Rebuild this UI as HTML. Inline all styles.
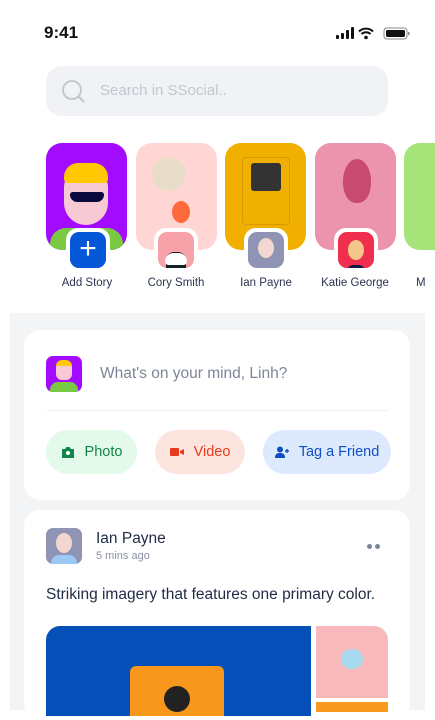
<!DOCTYPE html>
<html><head><meta charset="utf-8"><style>
*{margin:0;padding:0;box-sizing:border-box}
body{width:435px;height:710px;overflow:hidden;background:#fff;font-family:"Liberation Sans",sans-serif;position:relative;color:#1f2a44}
.abs{position:absolute}
.story{position:absolute;top:143px;width:81px;height:107px;border-radius:16px;overflow:hidden}
.badge{position:absolute;top:228px;width:44px;height:44px;border-radius:12px;background:#fff;padding:4px}
.badge div{width:36px;height:36px;border-radius:9px;overflow:hidden;position:relative}
.lbl{position:absolute;top:277px;font-size:11.5px;color:#2b3550;text-align:center;width:100px}
.btn{position:absolute;top:430px;height:44px;border-radius:22px;font-size:14.5px;display:flex;align-items:center;justify-content:center;gap:10px}
</style></head><body>
<div class="abs" style="left:44px;top:23px;font-size:17px;font-weight:bold;color:#111">9:41</div>
<svg class="abs" style="left:336px;top:27px" width="76" height="14" viewBox="0 0 76 14">
<rect x="0" y="8" width="3" height="4" rx="1" fill="#111"/><rect x="5" y="6" width="3" height="6" rx="1" fill="#111"/><rect x="10" y="3" width="3" height="9" rx="1" fill="#111"/><rect x="15" y="0" width="3" height="12" rx="1" fill="#111"/>
<path d="M23 4.5a10 10 0 0 1 14 0M25.5 7a6.5 6.5 0 0 1 9 0" stroke="#111" stroke-width="2" fill="none"/><circle cx="30" cy="10.5" r="1.8" fill="#111"/>
<rect x="48" y="1" width="23" height="11" rx="3" fill="none" stroke="#888" stroke-width="1"/><rect x="50" y="3" width="19" height="7" rx="1.5" fill="#111"/><rect x="72" y="5" width="1.5" height="3" fill="#888"/>
</svg>
<div class="abs" style="left:46px;top:66px;width:342px;height:50px;border-radius:16px;background:#f1f2f5"></div>
<svg class="abs" style="left:61px;top:79px" width="26" height="26" viewBox="0 0 26 26"><circle cx="11" cy="11" r="9" stroke="#c3c7d0" stroke-width="2" fill="none"/><path d="M17.5 17.5l5 5" stroke="#c3c7d0" stroke-width="2.2" stroke-linecap="round"/></svg>
<div class="abs" style="left:100px;top:82px;font-size:15px;color:#c2c6cf">Search in SSocial..</div>

<div class="story" style="left:46px;background:#a30bff">
 <div class="abs" style="left:18px;top:26px;width:44px;height:56px;background:#f6c9d4;border-radius:18px 18px 22px 22px"></div>
 <div class="abs" style="left:18px;top:20px;width:44px;height:20px;background:#ffc800;border-radius:14px 14px 4px 4px"></div>
 <div class="abs" style="left:24px;top:49px;width:34px;height:10px;background:#0c0a3c;border-radius:3px 3px 8px 8px"></div>
 <div class="abs" style="left:4px;top:85px;width:73px;height:30px;background:#7ac943;border-radius:16px 16px 0 0"></div>
</div>
<div class="story" style="left:136px;background:#ffd6d3">
 <div class="abs" style="left:16px;top:14px;width:34px;height:34px;background:#e9dcc8;border-radius:50%"></div>
 <div class="abs" style="left:36px;top:58px;width:18px;height:22px;background:#ff6a3d;border-radius:50%"></div>
</div>
<div class="story" style="left:225px;background:#f1b000">
 <div class="abs" style="left:26px;top:20px;width:30px;height:28px;background:#333;border-radius:3px"></div>
 <div class="abs" style="left:17px;top:14px;width:48px;height:68px;background:#f0b000;border:1px solid #d99a00;border-radius:4px;z-index:0"></div>
 <div class="abs" style="left:26px;top:20px;width:30px;height:28px;background:#333;border-radius:3px"></div>
</div>
<div class="story" style="left:315px;background:#ec93ad">
 <div class="abs" style="left:28px;top:16px;width:28px;height:44px;background:#c84a72;border-radius:50% 50% 45% 45%"></div>
</div>
<div class="story" style="left:404px;background:#a6e47a"></div>

<div class="badge" style="left:66px"><div style="background:#0457d6;color:#fff;font-size:30px;line-height:34px;text-align:center">+</div></div>
<div class="badge" style="left:154px"><div style="background:#f6a2a8"><div class="abs" style="left:8px;top:20px;width:20px;height:16px;background:#122;border-radius:8px 8px 0 0"></div><div class="abs" style="left:7px;top:5px;width:22px;height:12px;background:#fff;border-radius:10px 10px 4px 4px"></div></div></div>
<div class="badge" style="left:244px"><div style="background:#8f93b4"><div class="abs" style="left:10px;top:6px;width:16px;height:20px;background:#f3d6d0;border-radius:50%"></div><div class="abs" style="left:6px;top:28px;width:24px;height:10px;background:#9bc8f2;border-radius:8px 8px 0 0"></div></div></div>
<div class="badge" style="left:334px"><div style="background:#ef2f4d"><div class="abs" style="left:10px;top:8px;width:16px;height:20px;background:#f5c68a;border-radius:50%"></div><div class="abs" style="left:6px;top:29px;width:24px;height:9px;background:#0c1840;border-radius:8px 8px 0 0"></div><div class="abs" style="left:9px;top:4px;width:18px;height:8px;background:#0c1840;border-radius:8px 8px 2px 2px"></div></div></div>

<div class="lbl" style="left:37px">Add Story</div>
<div class="lbl" style="left:126px">Cory Smith</div>
<div class="lbl" style="left:216px">Ian Payne</div>
<div class="lbl" style="left:305px">Katie George</div>
<div class="lbl" style="left:416px;text-align:left">M</div>

<div class="abs" style="left:10px;top:313px;width:415px;height:397px;background:#f3f4f6"></div>
<div class="abs" style="left:24px;top:330px;width:386px;height:170px;background:#fff;border-radius:16px"></div>
<div class="abs" style="left:46px;top:356px;width:36px;height:36px;border-radius:7px;background:#a30bff;overflow:hidden"><div class="abs" style="left:10px;top:6px;width:16px;height:18px;background:#f6c9d4;border-radius:6px"></div><div class="abs" style="left:10px;top:4px;width:16px;height:6px;background:#ffc800;border-radius:6px 6px 0 0"></div><div class="abs" style="left:4px;top:26px;width:28px;height:12px;background:#7ac943;border-radius:8px 8px 0 0"></div></div>
<div class="abs" style="left:100px;top:365px;font-size:15.5px;color:#7d8598">What's on your mind, Linh?</div>
<div class="abs" style="left:46px;top:410px;width:342px;height:1px;background:#eef0f3"></div>
<div class="btn" style="left:46px;width:91px;background:#e3faea;color:#12854a"><svg width="14" height="12" viewBox="0 0 14 12"><path d="M1 3h3l1.5-2h3L10 3h3v9H1z" fill="#12854a"/><circle cx="7" cy="7" r="2" fill="#fff"/></svg>Photo</div>
<div class="btn" style="left:155px;width:90px;background:#fde5df;color:#e8391b"><svg width="14" height="10" viewBox="0 0 14 10"><rect x="0" y="1" width="9" height="8" rx="1" fill="#e8391b"/><path d="M10 4l4-2v6l-4-2z" fill="#e8391b"/></svg>Video</div>
<div class="btn" style="left:263px;width:128px;background:#dde9fc;color:#0f4fc4"><svg width="14" height="12" viewBox="0 0 14 12"><circle cx="5" cy="3.5" r="3" fill="#0f4fc4"/><path d="M0 12c0-4 2-5 5-5s5 1 5 5z" fill="#0f4fc4"/><path d="M12 3v4M10 5h4" stroke="#0f4fc4" stroke-width="1.4"/></svg>Tag a Friend</div>

<div class="abs" style="left:24px;top:510px;width:386px;height:210px;background:#fff;border-radius:16px"></div>
<div class="abs" style="left:46px;top:528px;width:36px;height:36px;border-radius:7px;background:#8f93b4;overflow:hidden"><div class="abs" style="left:10px;top:5px;width:16px;height:20px;background:#f3d6d0;border-radius:50%"></div><div class="abs" style="left:5px;top:27px;width:26px;height:10px;background:#9bc8f2;border-radius:8px 8px 0 0"></div></div>
<div class="abs" style="left:96px;top:530px;font-size:15.5px;color:#1f2a44">Ian Payne</div>
<div class="abs" style="left:96px;top:550px;font-size:11px;color:#8a90a0">5 mins ago</div>
<div class="abs" style="left:367px;top:544px;width:5px;height:5px;border-radius:50%;background:#7d8598"></div>
<div class="abs" style="left:375px;top:544px;width:5px;height:5px;border-radius:50%;background:#7d8598"></div>
<div class="abs" style="left:46px;top:586px;font-size:15.5px;color:#1f2a44">Striking imagery that features one primary color.</div>
<div class="abs" style="left:46px;top:626px;width:265px;height:90px;background:#0550b8;border-radius:14px 0 0 0;overflow:hidden">
 <div class="abs" style="left:84px;top:40px;width:94px;height:60px;background:#f7981c;border-radius:6px"></div>
 <div class="abs" style="left:118px;top:60px;width:26px;height:26px;background:#222;border-radius:50%"></div>
</div>
<div class="abs" style="left:316px;top:626px;width:72px;height:72px;background:#f8b9bd;border-radius:0 14px 0 0"><div class="abs" style="left:25px;top:23px;width:22px;height:20px;background:#a7d9ee;border-radius:50%"></div></div>
<div class="abs" style="left:316px;top:702px;width:72px;height:10px;background:#f89a20"></div>
</body></html>
